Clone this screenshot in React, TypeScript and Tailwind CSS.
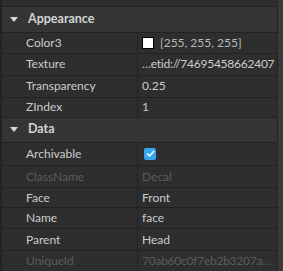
import React from "react";

type Row = {
  label: string;
  value?: string;
  kind?: "color" | "check";
  dim?: boolean;
  tight?: boolean;
  h: string;
};

const appearance: Row[] = [
  { label: "Color3", value: "[255, 255, 255]", kind: "color", h: "h-[21px]" },
  { label: "Texture", value: "…etid://74695458662407", tight: true, h: "h-[22px]" },
  { label: "Transparency", value: "0.25", h: "h-[22px]" },
  { label: "ZIndex", value: "1", h: "h-[20px]" },
];

const data: Row[] = [
  { label: "Archivable", kind: "check", h: "h-[24px]" },
  { label: "ClassName", value: "Decal", dim: true, h: "h-[22px]" },
  { label: "Face", value: "Front", h: "h-[20px]" },
  { label: "Name", value: "face", h: "h-[21px]" },
  { label: "Parent", value: "Head", h: "h-[22px]" },
  { label: "UniqueId", value: "70ab60c0f7eb2b3207a…", dim: true, tight: true, h: "h-[21px]" },
];

function Header({ title, h }: { title: string; h: string }) {
  return (
    <div className={`flex items-center border-t border-[#222222] bg-[#353535] ${h}`}>
      <svg width="8" height="5" viewBox="0 0 8 5" className="ml-[8px] mr-[10px]">
        <path d="M0 0H8L4 5Z" fill="#d8d8d8" />
      </svg>
      <span className="text-[12.5px] font-bold text-[#d4d4d4]">{title}</span>
    </div>
  );
}

function PropRow({ row }: { row: Row }) {
  const text = row.dim ? "text-[#5c5c5c]" : "text-[#cccccc]";
  return (
    <div className={`flex items-center border-t border-[#222222] ${row.h}`}>
      <div className={`flex h-full w-[136px] items-center border-r border-[#222222] pl-[24px] text-[12px] ${text}`}>
        {row.label}
      </div>
      <div
        className={`flex min-w-0 flex-1 items-center overflow-hidden whitespace-nowrap pl-[4px] text-[12px] ${text} ${
          row.tight ? "tracking-[-0.25px]" : ""
        }`}
      >
        {row.kind === "color" && (
          <>
            <span className="mr-[6px] h-[12px] w-[12px] border border-black bg-white" />
            <span className="text-[#b9b9b9]">{row.value}</span>
          </>
        )}
        {row.kind === "check" && (
          <span className="ml-[2px] flex h-[12px] w-[12px] items-center justify-center rounded-[2px] bg-[#35a7f2]">
            <svg width="9" height="7" viewBox="0 0 9 7">
              <path d="M1 3.5L3.5 6L8 1" stroke="#fff" strokeWidth="1.6" fill="none" />
            </svg>
          </span>
        )}
        {!row.kind && row.value}
      </div>
    </div>
  );
}

export default function App() {
  return (
    <div
      className="flex h-[271px] w-[283px] overflow-hidden bg-[#2e2e2e]"
      style={{ fontFamily: "Lato, 'Open Sans', sans-serif" }}
    >
      <div className="flex w-[278px] flex-col border-l-2 border-r border-[#232323]">
        <div className="h-[6px] shrink-0" />
        <Header title="Appearance" h="h-[26px]" />
        {appearance.map((r) => (
          <PropRow key={r.label} row={r} />
        ))}
        <Header title="Data" h="h-[25px]" />
        {data.map((r) => (
          <PropRow key={r.label} row={r} />
        ))}
      </div>
      <div className="flex-1 bg-[#3a3a3a]" />
    </div>
  );
}
